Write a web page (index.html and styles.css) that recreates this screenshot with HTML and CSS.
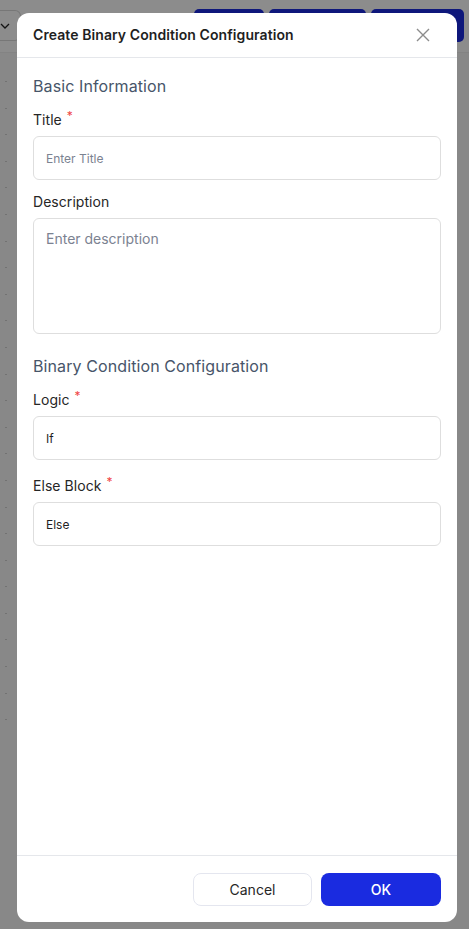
FILE: index.html
```html
<!DOCTYPE html>
<html lang="en">
<head>
<meta charset="utf-8">
<title>Create Binary Condition Configuration</title>
<link rel="stylesheet" href="styles.css">
</head>
<body>
<div class="page">
  <div class="toolbar">
    <div class="select-stub"><svg width="10" height="6" viewBox="0 0 10 6"><path d="M1 1l4 4 4-4" fill="none" stroke="#222" stroke-width="1.3"/></svg></div>
    <div class="search-stub"></div>
    <div class="tb-btn w1"></div>
    <div class="tb-btn w2"></div>
    <div class="tb-btn w3"></div>
  </div>
  <div class="page-body">
    <div class="rows">
      <span></span><span></span><span></span><span></span><span></span><span></span><span></span><span></span><span></span><span></span><span></span><span></span><span></span><span></span><span></span><span></span><span></span><span></span><span></span><span></span><span></span><span></span><span></span><span></span><span></span>
    </div>
  </div>
</div>

<div class="overlay">
  <div class="modal">
    <div class="modal-header">
      <h1 class="modal-title">Create Binary Condition Configuration</h1>
      <button class="close-btn" aria-label="Close">
        <svg width="14" height="14" viewBox="0 0 14 14"><path d="M1 1l12 12M13 1L1 13" stroke="#8c8c8c" stroke-width="1.4" fill="none"/></svg>
      </button>
    </div>
    <div class="modal-body">
      <h2 class="section-title">Basic Information</h2>
      <div class="field">
        <label class="label">Title <span class="req">*</span></label>
        <div class="input placeholder small">Enter Title</div>
      </div>
      <div class="field">
        <label class="label">Description</label>
        <div class="textarea placeholder">Enter description</div>
      </div>
      <h2 class="section-title second">Binary Condition Configuration</h2>
      <div class="field">
        <label class="label">Logic <span class="req">*</span></label>
        <div class="input value">If</div>
      </div>
      <div class="field last">
        <label class="label">Else Block <span class="req">*</span></label>
        <div class="input value">Else</div>
      </div>
    </div>
    <div class="modal-footer">
      <button class="btn btn-cancel">Cancel</button>
      <button class="btn btn-ok">OK</button>
    </div>
  </div>
</div>
</body>
</html>
```

FILE: styles.css
```css
* { box-sizing: border-box; }
html, body { margin: 0; padding: 0; }
body {
  width: 469px;
  height: 929px;
  overflow: hidden;
  font-family: Inter, "Noto Sans", "Liberation Sans", sans-serif;
  background: #ffffff;
  position: relative;
}

/* background page (dimmed) */
.page { height: 929px; display: flex; flex-direction: column; }
.toolbar {
  height: 52px;
  display: flex;
  align-items: flex-start;
  padding-top: 9px;
  gap: 5px;
}
.select-stub {
  width: 21px; height: 31px; margin-top: 1px;
  border: 1px solid #d9d9d9; border-left: none;
  border-radius: 0 6px 6px 0;
  display: flex; align-items: center; justify-content: flex-start; padding-left: 0;
}
.search-stub {
  width: 150px; height: 31px; margin-top: 1px; margin-left: 7px;
  background: #ffffff; border-radius: 6px;
}
.tb-btn { height: 33px; background: #1a2be0; border-radius: 5px; }
.w1 { width: 70px; margin-left: 6px; }
.w2 { width: 97px; }
.w3 { width: 93px; }
.page-body { flex: 1; background: #f7f7f7; border-top: 1px solid #eeeeee; }
.rows { display: flex; flex-direction: column; padding-top: 28px; padding-left: 5px; gap: 25.6px; }
.rows span { width: 2px; height: 1px; background: #cfcfcf; }

.overlay {
  position: absolute; inset: 0;
  background: rgba(0, 0, 0, 0.45);
  padding: 13px 12px 7px 17px;
}

/* modal */
.modal {
  width: 440px;
  height: 909px;
  background: #ffffff;
  border-radius: 12px;
  display: flex;
  flex-direction: column;
  overflow: hidden;
}
.modal-header {
  height: 45px;
  border-bottom: 1px solid #e5e7eb;
  display: flex;
  align-items: center;
  justify-content: space-between;
  padding: 0 16px 1px 16px;
}
.modal-title {
  margin: 0;
  font-size: 14px;
  font-weight: 600;
  color: #1f1f1f;
  letter-spacing: 0.08px;
}
.close-btn {
  background: none; border: none; padding: 0; margin-right: 11px;
  width: 14px; height: 14px; display: flex; cursor: pointer;
}

.modal-body {
  flex: 1;
  padding: 16px 16px 0 16px;
  display: flex;
  flex-direction: column;
}
.section-title {
  margin: 0;
  font-size: 16px;
  font-weight: 400;
  line-height: 24px;
  color: #475569;
  letter-spacing: 0.1px;
}
.section-title.second { margin-top: 20px; }
.field { margin-top: 12px; display: flex; flex-direction: column; gap: 6px; }
.field.last { margin-top: 16px; }
.label {
  display: block;
  font-size: 14px;
  line-height: 20px;
  height: 20px;
  color: #262626;
  letter-spacing: 0.05px;
}
.req {
  color: #ef4444;
  font-size: 12px;
  line-height: 0;
  position: relative;
  top: -5px;
  margin-left: 1px;
}
.input, .textarea {
  width: 408px;
  border: 1px solid #dedede;
  border-radius: 6px;
  padding: 0 12px;
  background: #fff;
}
.input {
  height: 44px;
  display: flex;
  align-items: center;
  font-size: 12px;
}
.textarea {
  height: 116px;
  padding-top: 10px;
  font-size: 14px;
  line-height: 20px;
}
.placeholder { color: #7b8291; }
.value { color: #1f1f1f; }

.modal-footer {
  height: 67px;
  border-top: 1px solid #e5e7eb;
  display: flex;
  align-items: center;
  justify-content: flex-end;
  gap: 9px;
  padding: 0 16px 0 0;
}
.btn {
  height: 33px;
  border-radius: 8px;
  font-family: inherit;
  font-size: 14px;
  cursor: pointer;
}
.btn-cancel {
  width: 119px;
  background: #fff;
  border: 1px solid #e4e6ef;
  color: #262626;
}
.btn-ok {
  width: 120px;
  background: #1a2be0;
  border: none;
  color: #fff;
  font-weight: 500;
}
```
